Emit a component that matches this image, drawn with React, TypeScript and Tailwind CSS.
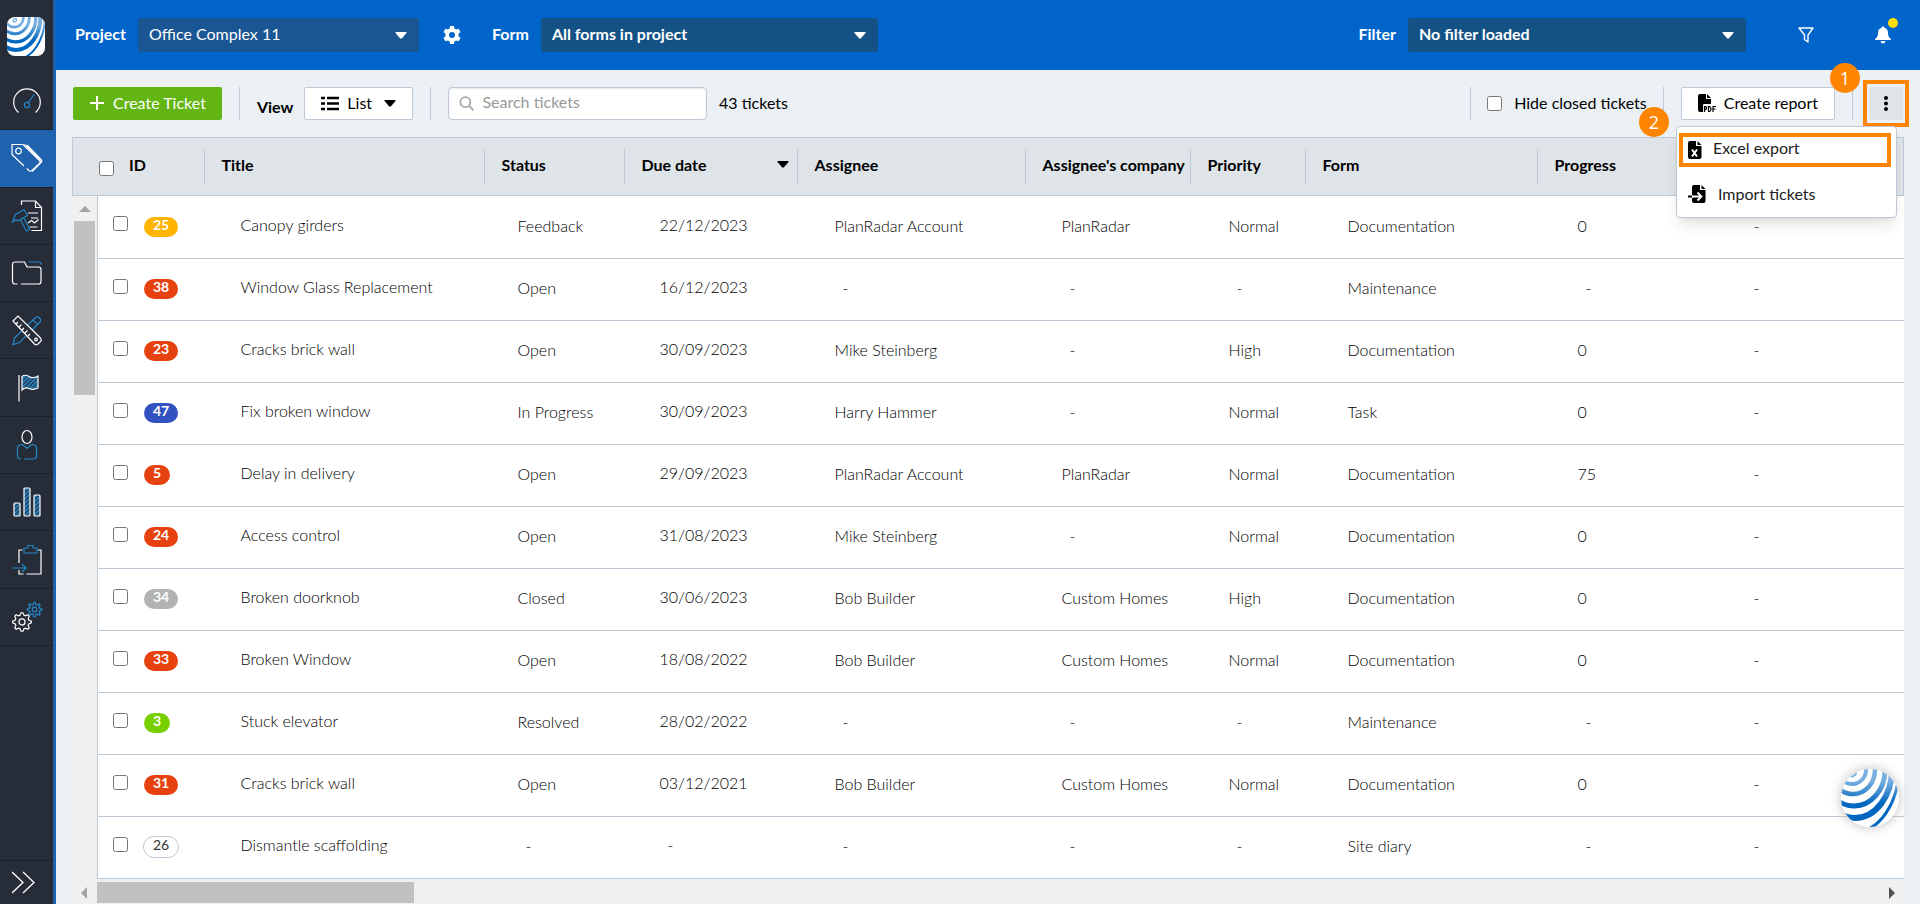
import React from 'react';

const columns = [
  { label: 'Title', head: 'w-[280px]', body: 'w-[277px]' },
  { label: 'Status', head: 'w-[140px]', body: 'w-[142px]' },
  { label: 'Due date', head: 'w-[173px]', body: 'w-[175px]' },
  { label: 'Assignee', head: 'w-[228px]', body: 'w-[227px]' },
  { label: "Assignee's company", head: 'w-[165px]', body: 'w-[167px]' },
  { label: 'Priority', head: 'w-[115px]', body: 'w-[119px]' },
  { label: 'Form', head: 'w-[232px]', body: 'w-[230px]' },
  { label: 'Progress', head: '', body: 'w-[168px]' },
];

const badges = {
  Feedback: 'bg-[#ffb400] text-white font-bold',
  Open: 'bg-[#e5420f] text-white font-bold',
  'In Progress': 'bg-[#3352c2] text-white font-bold',
  Closed: 'bg-[#b3b3b3] text-white font-bold',
  Resolved: 'bg-[#78cf00] text-white font-bold',
  '-': 'bg-white text-[#333] font-normal outline outline-[#bcc8d6]',
};

const tickets = [
  [25, 'Canopy girders', 'Feedback', '22/12/2023', 'PlanRadar Account', 'PlanRadar', 'Normal', 'Documentation', '0', '-'],
  [38, 'Window Glass Replacement', 'Open', '16/12/2023', '-', '-', '-', 'Maintenance', '-', '-'],
  [23, 'Cracks brick wall', 'Open', '30/09/2023', 'Mike Steinberg', '-', 'High', 'Documentation', '0', '-'],
  [47, 'Fix broken window', 'In Progress', '30/09/2023', 'Harry Hammer', '-', 'Normal', 'Task', '0', '-'],
  [5, 'Delay in delivery', 'Open', '29/09/2023', 'PlanRadar Account', 'PlanRadar', 'Normal', 'Documentation', '75', '-'],
  [24, 'Access control', 'Open', '31/08/2023', 'Mike Steinberg', '-', 'Normal', 'Documentation', '0', '-'],
  [34, 'Broken doorknob', 'Closed', '30/06/2023', 'Bob Builder', 'Custom Homes', 'High', 'Documentation', '0', '-'],
  [33, 'Broken Window', 'Open', '18/08/2022', 'Bob Builder', 'Custom Homes', 'Normal', 'Documentation', '0', '-'],
  [3, 'Stuck elevator', 'Resolved', '28/02/2022', '-', '-', '-', 'Maintenance', '-', '-'],
  [31, 'Cracks brick wall', 'Open', '03/12/2021', 'Bob Builder', 'Custom Homes', 'Normal', 'Documentation', '0', '-'],
  [26, 'Dismantle scaffolding', '-', '-', '-', '-', '-', 'Site diary', '-', '-'],
];

const navItems = [
  {
    name: 'Dashboard',
    icon: (
      <>
        <path d="M7.500 28.500A13.300 13.300 0 1 1 24.500 28.500" stroke="#fff" transform="translate(0 -1)" />
        <circle cx="16" cy="20" r="2.600" stroke="#2487c9" />
        <path d="M17.300 17.600 23 9.500" stroke="#2487c9" />
      </>
    ),
  },
  {
    name: 'Tickets',
    icon: (
      <>
        <path d="M13 24 1 12.500V2.500h11l16.500 16c1.200 1.200 1 2 0 3l-7.500 7c-1.200 1-2 1-3.200 0l-2-2" stroke="#fff" />
        <circle cx="7.500" cy="9" r="2.800" stroke="#fff" />
        <path d="M13.500 2.500 30 18.500M16 3l14 14.500c1.200 1.200 1 2 0 3l-9 9" stroke="#fff" />
      </>
    ),
  },
  {
    name: 'Defects',
    icon: (
      <>
        <path d="M10.500 5V1h14l6 6.500v23h-10M24.500 1v6.500h6M17 13h10M20 18h7M18.500 27h8M17 23l3.500-2.500 3 2.500 4-3.500" stroke="#fff" />
        <path d="M1.500 22 4.500 14.500 13 9.500l3.500 6-9 5-3-.5zM9.500 20l6 11 3.300-1.500-6-11.500" stroke="#2487c9" />
      </>
    ),
  },
  {
    name: 'Documents',
    icon: (
      <>
        <path d="M6.500 27H4a2.500 2.500 0 0 1-2.500-2.500V7A2.500 2.500 0 0 1 4 5h9.500l2.500 5h11.500a2.500 2.500 0 0 1 2.500 2.500v12a2.500 2.500 0 0 1-2.500 2.500H10" stroke="#fff" />
        <path d="M17.500 5H28q2 0 2 2.500" stroke="#2487c9" />
      </>
    ),
  },
  {
    name: 'Plans',
    icon: (
      <>
        <path d="M2 30.500 3.500 24 24.500 3.500q2-1.500 4 .5t.5 4L8.500 28.500zM22 6l4.500 4.500" stroke="#2487c9" />
        <path d="m2 7 5-5 22.500 22q1.500 2 0 3.500L27 30q-2 1.500-3.500 0z" fill="#272c39" stroke="#fff" />
        <path d="m5 10 2-2m1 5 2.500-2.500M11 16l2-2m1 5 2.500-2.500M17 22l2-2" stroke="#fff" />
        <circle cx="25" cy="25.500" r="1.300" stroke="#fff" />
      </>
    ),
  },
  {
    name: 'Milestones',
    icon: (
      <>
        <path d="M11 4.500q3-2.500 7 0t9-.5v12q-5 2.500-9 .5t-7 1.500z" fill="url(#hatch)" stroke="#fff" />
        <path d="M8 3v26.500" stroke="#fff" />
      </>
    ),
  },
  {
    name: 'Contacts',
    icon: (
      <>
        <ellipse cx="16" cy="8" rx="5" ry="6.500" stroke="#fff" />
        <path d="M10 30q-3.500 0-3.500-3v-8q0-3.500 5-3.500l4.500 4 4.500-4q5 0 5 3.500v8q0 3-3.500 3h-9" stroke="#2487c9" />
      </>
    ),
  },
  {
    name: 'Statistics',
    icon: (
      <>
        <rect x="3" y="17" width="6" height="13" rx="1" fill="url(#hatch)" stroke="#fff" />
        <rect x="13" y="2" width="6" height="28" rx="1" fill="url(#hatch)" stroke="#fff" />
        <rect x="23" y="9" width="6" height="21" rx="1" fill="url(#hatch)" stroke="#fff" />
      </>
    ),
  },
  {
    name: 'Imports',
    icon: (
      <>
        <path d="M11.500 6H8v13m0 7v4h4.500m3 0H30V6h-3" stroke="#fff" />
        <path d="M13 9V4h4V1.500h5V4h4v5zM1.500 24H15m-4-4 4 4-4 4" stroke="#2487c9" />
      </>
    ),
  },
  {
    name: 'Settings',
    icon: (
      <>
        <Cog x={11} y={21} r={8} color="#fff" />
        <Cog x={23.500} y={8.500} r={6} color="#2487c9" />
      </>
    ),
  },
];

function Cog({ x, y, r, color }: any) {
  const points = [];
  for (let i = 0; i < 32; i++) {
    const angle = ((i - 0.5) * Math.PI) / 16;
    const d = i % 4 < 2 ? r + 1.3 : r - 1;
    points.push(`${(x + d * Math.cos(angle)).toFixed(2)},${(y + d * Math.sin(angle)).toFixed(2)}`);
  }
  return (
    <g stroke={color}>
      <polygon points={points.join(' ')} />
      <circle cx={x} cy={y} r={r * 0.38} />
    </g>
  );
}

function Rings({ id }: any) {
  return (
    <>
      <defs>
        <linearGradient id={id} x1="0" y1="0" x2="0" y2="58" gradientUnits="userSpaceOnUse">
          <stop offset="0.200" stopColor="#79b0e0" />
          <stop offset="0.600" stopColor="#0067c0" />
        </linearGradient>
      </defs>
      <rect width="58" height="58" fill="#fff" />
      <g fill="none" stroke={`url(#${id})`}>
        <ellipse cx="12" cy="5" rx="3" ry="2" strokeWidth="2" transform="rotate(-30 12 5)" />
        <ellipse cx="11" cy="1" rx="14" ry="14" strokeWidth="4" />
        <ellipse cx="12" cy="1" rx="22" ry="24" strokeWidth="4.500" />
        <ellipse cx="13" cy="1" rx="31" ry="36" strokeWidth="5" />
        <ellipse cx="14" cy="0" rx="37" ry="49" strokeWidth="6" />
        <ellipse cx="14" cy="-2" rx="44" ry="65" strokeWidth="3" />
      </g>
    </>
  );
}

const Caret = ({ className }: any) => (
  <svg className={className} width="12" height="7" viewBox="0 0 12 7" fill="currentColor" aria-hidden="true">
    <path d="M1 0h10q1 0 .5 1L7 6.300Q6 7 5 6.300L.5 1Q0 0 1 0z" />
  </svg>
);

const HeaderSelect = ({ id, value, className }: any) => (
  <div className="relative">
    <select id={id} className={`h-[34px] appearance-none rounded-xs pb-0.5 text-white ${className}`}>
      <option>{value}</option>
    </select>
    <Caret className="pointer-events-none absolute top-[14px] right-3 text-white" />
  </div>
);

const Divider = () => <div className="h-[33px] w-px bg-[#bfc8d6]" />;

const FileIcon = ({ children, className }: any) => (
  <svg className={className} width="18" height="20" viewBox="0 0 18 20" fill="none" aria-hidden="true">
    {children}
  </svg>
);

const Sidebar = () => (
  <nav className="flex w-14 shrink-0 flex-col border-r-3 border-[#1f62ae] bg-[#272c39]">
    <div className="flex h-[73px] shrink-0 items-center pl-[7px]">
      <svg width="38" height="39" viewBox="0 0 58 58" preserveAspectRatio="none" className="rounded-lg" role="img" aria-label="Logo">
        <Rings id="logoFade" />
      </svg>
    </div>
    <div className="flex h-[573px] shrink-0 flex-col">
      {navItems.map((item, index) => (
        <button
          key={item.name}
          aria-label={item.name}
          className={`flex w-full flex-1 items-center justify-center border-b border-[#1c202b] ${index === 1 ? 'bg-[#1f62ae]' : ''}`}
        >
          <svg width="32" height="32" viewBox="0 0 32 32" fill="none" strokeWidth="1.200">
            {item.icon}
          </svg>
        </button>
      ))}
    </div>
    <button aria-label="Expand menu" className="mt-auto flex h-[45px] shrink-0 items-center border-t border-[#1c202b] pl-3">
      <svg width="23" height="23" viewBox="0 0 23 23" fill="none" stroke="#fff" strokeWidth="1.300">
        <path d="M0 1l11 10.500L0 22M11 1l11 10.500L11 22" />
      </svg>
    </button>
  </nav>
);

const TopBar = () => (
  <header className="flex h-[70px] shrink-0 items-center bg-[#0064cb] pl-[19px] text-base text-white">
    <label htmlFor="project" className="mr-3 pb-0.5 font-bold">Project</label>
    <HeaderSelect id="project" value="Office Complex 11" className="w-[281px] bg-[#1b5694] pl-[11px]" />
    <button aria-label="Project settings" className="ml-6">
      <svg width="18" height="18" viewBox="0 0 24 24" fill="currentColor">
        <path
          fillRule="evenodd"
          d="M9.500 0h5l.7 3.400 2.300 1.300 3.300-1.100 2.500 4.300-2.600 2.300v3.600l2.600 2.300-2.500 4.300-3.300-1.100-2.300 1.300-.7 3.400h-5l-.7-3.400-2.300-1.300-3.300 1.100L.7 16.100l2.600-2.300v-3.600L.7 7.900l2.500-4.300 3.300 1.100 2.300-1.300zM12 8a4 4 0 1 0 0 8 4 4 0 0 0 0-8z"
        />
      </svg>
    </button>
    <label htmlFor="form" className="mr-3 ml-[31px] pb-0.5 font-bold">Form</label>
    <HeaderSelect id="form" value="All forms in project" className="w-[337px] bg-[#145286] pl-[11px] font-bold" />
    <label htmlFor="filter" className="mr-3 ml-auto pb-0.5 font-bold">Filter</label>
    <HeaderSelect id="filter" value="No filter loaded" className="w-[338px] bg-[#145286] pl-[11px] font-bold" />
    <button aria-label="Edit filter" className="ml-[52px]">
      <svg width="16" height="16" viewBox="0 0 16 16" fill="none" stroke="currentColor" strokeWidth="1.400" strokeLinejoin="round">
        <path d="M1 1h14l-5 7v7l-3.500-2.500V8z" />
      </svg>
    </button>
    <button aria-label="Notifications" className="relative mr-[29px] ml-[61px]">
      <svg width="16" height="18" viewBox="0 0 16 18" fill="currentColor">
        <path d="M8 0q1 0 1 1.500Q13 2.500 13 7q0 4 3 6v1H0v-1q3-2 3-6 0-4.500 4-5.500Q7 0 8 0zM5.500 15h5q-.5 2.500-2.500 2.500T5.500 15z" />
      </svg>
      <span className="absolute -top-2 left-[13px] size-2.5 rounded-full bg-[#ffdc0a]" />
    </button>
  </header>
);

const Toolbar = () => (
  <div className="flex h-[67px] shrink-0 items-center pr-[11px] pl-[17px] text-base text-black">
    <button className="flex h-[33px] items-center gap-2 rounded-xs bg-[#62b512] px-4 pb-0.5 text-white">
      <svg width="16" height="16" viewBox="0 0 16 16" stroke="currentColor" strokeWidth="2">
        <path d="M8 1v14M1 8h14" />
      </svg>
      Create Ticket
    </button>
    <div className="mx-[17px]"><Divider /></div>
    <span className="mt-1.5 mr-[11px] font-bold">View</span>
    <button className="flex h-[33px] items-center rounded-xs border border-[#bfc8d6] bg-white px-4">
      <svg width="18" height="15" viewBox="0 0 18 15" stroke="currentColor" strokeWidth="2.500">
        <path d="M0 2h4M0 7.500h4M0 13h4M6 2h12M6 7.500h12M6 13h12" />
      </svg>
      <span className="mr-3 ml-2 pb-px">List</span>
      <Caret />
    </button>
    <div className="mx-[17px]"><Divider /></div>
    <label className="flex h-[33px] w-[259px] items-center gap-2 rounded-sm border border-[#bfc8d6] bg-white pl-2.5 shadow-[inset_0_1px_2px_#e3e8ee]">
      <svg width="17" height="17" viewBox="0 0 17 17" fill="none" stroke="#aaa" strokeWidth="2">
        <circle cx="7" cy="7" r="5.500" />
        <path d="m11 11 5 5" />
      </svg>
      <input aria-label="Search tickets" placeholder="Search tickets" className="w-full bg-transparent pb-1 outline-none placeholder:text-[#999]" />
    </label>
    <span className="ml-3 pb-0.5">43 tickets</span>
    <div className="mr-4 ml-auto"><Divider /></div>
    <label className="flex items-center gap-3">
      <input type="checkbox" className="size-[15px]" />
      <span className="pb-0.5">Hide closed tickets</span>
    </label>
    <div className="mr-[17px] ml-4"><Divider /></div>
    <div className="relative">
      <button className="flex h-[33px] items-center gap-2 rounded-xs border border-[#bfc8d6] bg-white px-4">
        <svg width="18" height="19" viewBox="0 0 18 19" aria-hidden="true">
          <path d="M2 0h6v5h5v5H6q-1 0-1 1v7H2q-2 0-2-2V2q0-2 2-2zM9 0l4 4H9z" />
          <path d="M6.500 18v-5.500h1.300q1.500 1.500 0 3H6.500M10.500 12.500v5h1q1.500-.5 1.500-2.500t-1.500-2.500zM15 18v-5.500h3M15 15h2.500" fill="none" stroke="#000" strokeWidth="1.200" />
        </svg>
        <span className="pb-px">Create report</span>
      </button>
      <span className="absolute -top-6 left-[149px] flex h-[30px] w-[30px] items-center justify-center rounded-full bg-[#ff8500] font-['Open_Sans',sans-serif] text-lg leading-none text-white">1</span>
      <span className="absolute top-5 -left-[42px] z-20 flex h-[30px] w-[30px] items-center justify-center rounded-full bg-[#ff8500] font-['Open_Sans',sans-serif] text-lg leading-none text-white">2</span>
    </div>
    <div className="mr-[10px] ml-[17px]"><Divider /></div>
    <div className="relative">
      <button aria-label="More actions" className="flex h-[47px] w-[46px] items-center justify-center border-4 border-[#ff8500]">
        <span className="flex h-[33px] w-[34px] items-center justify-center rounded-xs bg-[#dfe4e8]">
          <svg width="4" height="15" viewBox="0 0 4 15"><circle cx="2" cy="2" r="2" /><circle cx="2" cy="7.500" r="2" /><circle cx="2" cy="13" r="2" /></svg>
        </span>
      </button>
      <div className="absolute top-[46px] right-3 z-10 flex h-[92px] w-[221px] flex-col rounded-sm border border-[#bfc8d6] bg-white text-[#222] shadow-lg">
        <button className="mt-1.5 ml-0.5 flex h-[34px] w-[212px] items-center gap-2 border-4 border-[#ff8500] pb-1 pl-1">
          <FileIcon className="mt-1">
            <path d="M3 1h6v5h5.500v11q0 2-2 2H3q-2 0-2-2V3q0-2 2-2zM10.500 1l4 4h-4z" fill="#000" />
            <path d="m5 9.500 5 7m0-7-5 7" stroke="#fff" strokeWidth="2" />
          </FileIcon>
          Excel export
        </button>
        <button className="mt-2.5 flex h-[34px] items-center gap-3 pb-px pl-[11px]">
          <FileIcon>
            <path d="M6 1h6v5h5.500v11q0 2-2 2H6q-2 0-2-2v-3h1v-3H4V3q0-2 2-2zM13.500 1l4 4h-4zM0 11.500h4v2H0z" fill="#000" />
            <path d="M5 12.500h8M9.500 8.500l4 4-4 4" stroke="#fff" strokeWidth="1.800" />
          </FileIcon>
          Import tickets
        </button>
      </div>
    </div>
  </div>
);

const TicketTable = () => (
  <div className="mr-4 ml-4 flex grow flex-col text-base">
    <table className="w-full table-fixed border border-[#bfc8d6] bg-[#dfe4e8]">
      <thead>
        <tr className="h-[58px] text-left text-black">
          <th className="w-[131px] p-0 pl-[26px]">
            <div className="flex items-center gap-[15px]">
              <input type="checkbox" aria-label="Select all tickets" className="mt-1 size-[15px]" />
              <span className="pb-1">ID</span>
            </div>
          </th>
          {columns.map((column) => (
            <th key={column.label} className={`p-0 ${column.head}`}>
              <div className="flex h-[35px] items-center justify-between border-l border-[#bfc8d6] pr-2 pb-1 pl-[17px] whitespace-nowrap">
                {column.label}
                {column.label === 'Due date' && <Caret />}
              </div>
            </th>
          ))}
        </tr>
      </thead>
    </table>
    <div className="flex">
      <div className="flex w-[25px] shrink-0 flex-col items-center bg-[#f0f0f0] pt-2.5">
        <svg width="12" height="6" viewBox="0 0 12 6" fill="#a3a3a3"><path d="M6 0l6 6H0z" /></svg>
        <div className="mt-[9px] h-[174px] w-[21px] bg-[#c1c1c1]" />
      </div>
      <table className="w-full table-fixed border-l border-[#bcc8d4] bg-white font-light text-black">
        <tbody>
          {tickets.map(([id, ...cells]) => (
            <tr key={id} className="h-[62px] border-b border-[#bcc8d4]">
              <td className="w-[125px] p-0 pl-[15px]">
                <div className="flex items-center gap-4 pb-1.5">
                  <input type="checkbox" aria-label={`Select ticket ${id}`} className="size-[15px]" />
                  <span className={`mt-1.5 h-5 rounded-full px-[9px] text-sm leading-4 ${badges[cells[1] as keyof typeof badges]}`}>{id}</span>
                </div>
              </td>
              {cells.map((cell, index) => (
                <td key={index} className={`p-0 whitespace-nowrap ${index === 0 || index === 2 ? 'pb-1' : 'pb-0.5'} ${cell === '-' ? 'pl-[26px]' : 'pl-[18px]'} ${columns[index] ? columns[index].body : ''}`}>
                  {cell}
                </td>
              ))}
            </tr>
          ))}
        </tbody>
      </table>
    </div>
    <div className="mt-0.5 flex h-6 items-center bg-[#f0f0f0]">
      <svg className="mr-[10px] ml-[9px]" width="6" height="12" viewBox="0 0 6 12" fill="#a3a3a3"><path d="M6 0v12L0 6z" /></svg>
      <div className="h-[21px] w-[317px] bg-[#c1c1c1]" />
      <svg className="mr-[9px] ml-auto" width="6" height="12" viewBox="0 0 6 12" fill="#505050"><path d="M0 0v12l6-6z" /></svg>
    </div>
  </div>
);

const App = () => {
  return (
    <div className="flex min-h-screen bg-[#ebf0f5] font-['Lato',sans-serif]">
      <svg width="0" height="0" className="absolute" aria-hidden="true">
        <pattern id="hatch" width="3" height="3" patternUnits="userSpaceOnUse" patternTransform="rotate(45)">
          <rect width="1.800" height="3" fill="#2487c9" />
        </pattern>
      </svg>
      <Sidebar />
      <main className="flex min-w-0 grow flex-col">
        <TopBar />
        <Toolbar />
        <TicketTable />
      </main>
      <button aria-label="Help" className="fixed right-[21px] bottom-[77px] size-[58px] overflow-hidden rounded-full shadow-[0_0_12px_#bbb]">
        <svg width="58" height="58" viewBox="0 0 58 58">
          <Rings id="helpFade" />
        </svg>
      </button>
    </div>
  );
};

export default App;
